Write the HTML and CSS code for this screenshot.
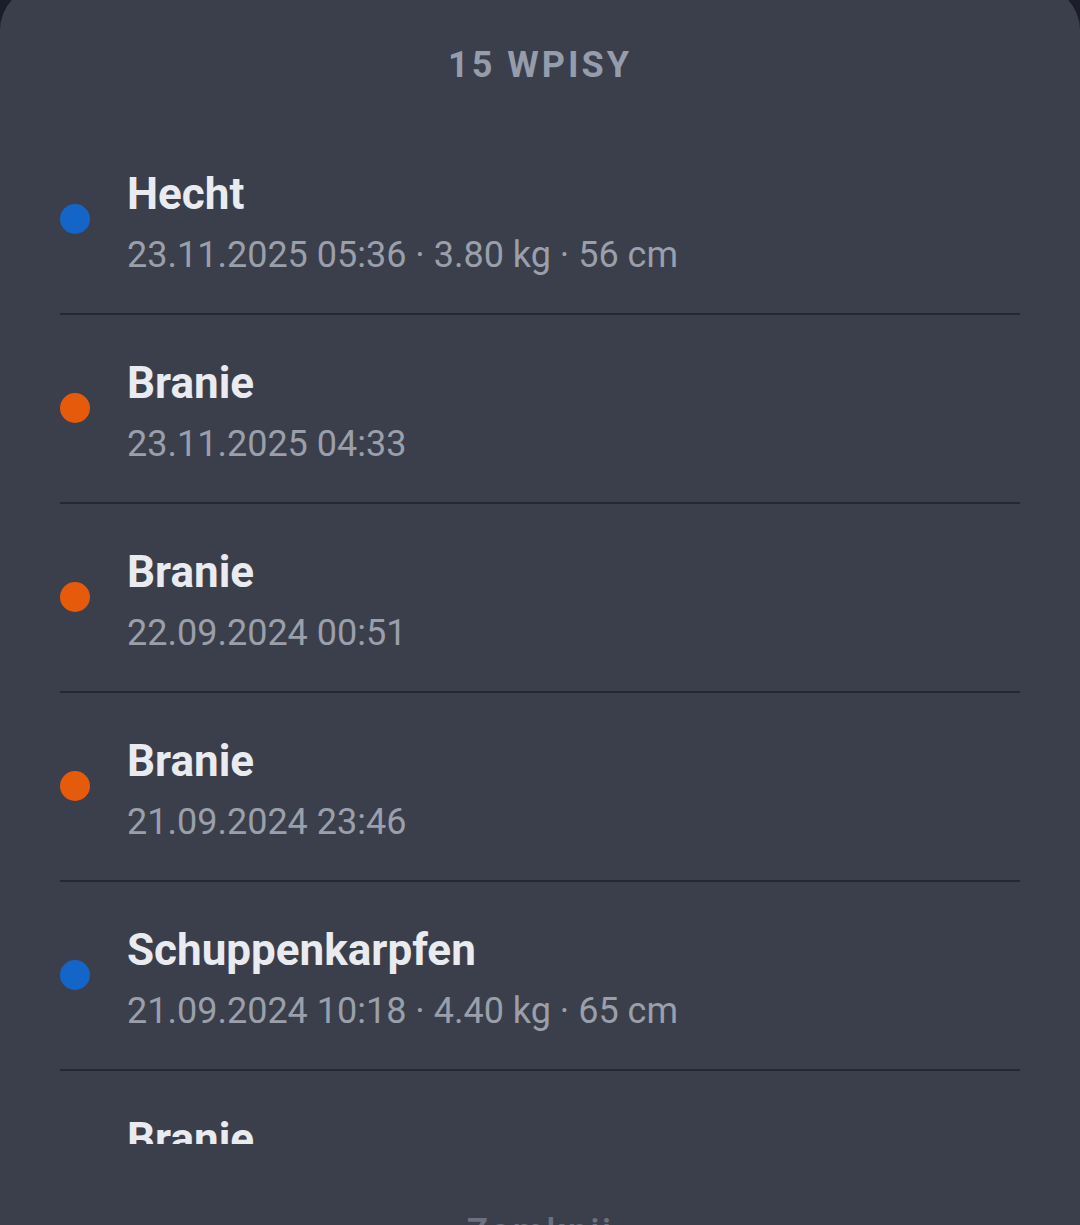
FILE: index.html
```html
<!DOCTYPE html>
<html>
<head>
    <title>Wpisy</title>
    <link rel="stylesheet" href="styles.css">
</head>
<body>
    <div class="sheet">
        <div class="sheet-header">15 WPISY</div>
        <div class="entry-list">
            <div class="entry">
                <span class="dot dot-catch"></span>
                <div class="entry-text">
                    <div class="entry-title">Hecht</div>
                    <div class="entry-meta">23.11.2025 05:36 · 3.80 kg · 56 cm</div>
                </div>
            </div>
            <div class="entry">
                <span class="dot dot-bite"></span>
                <div class="entry-text">
                    <div class="entry-title">Branie</div>
                    <div class="entry-meta">23.11.2025 04:33</div>
                </div>
            </div>
            <div class="entry">
                <span class="dot dot-bite"></span>
                <div class="entry-text">
                    <div class="entry-title">Branie</div>
                    <div class="entry-meta">22.09.2024 00:51</div>
                </div>
            </div>
            <div class="entry">
                <span class="dot dot-bite"></span>
                <div class="entry-text">
                    <div class="entry-title">Branie</div>
                    <div class="entry-meta">21.09.2024 23:46</div>
                </div>
            </div>
            <div class="entry">
                <span class="dot dot-catch"></span>
                <div class="entry-text">
                    <div class="entry-title">Schuppenkarpfen</div>
                    <div class="entry-meta">21.09.2024 10:18 · 4.40 kg · 65 cm</div>
                </div>
            </div>
            <div class="entry">
                <span class="dot dot-bite"></span>
                <div class="entry-text">
                    <div class="entry-title">Branie</div>
                    <div class="entry-meta">21.09.2024 08:12</div>
                </div>
            </div>
        </div>
        <div class="sheet-footer">
            <span class="close-button">Zamknij</span>
        </div>
    </div>
</body>
</html>
```

FILE: styles.css
```css
body {
    margin: 0;
    padding: 0;
    background-color: #1b1d2b;
    font-family: 'Roboto', 'Noto Sans', sans-serif;
    height: 1225px;
    overflow: hidden;
}

.sheet {
    margin-top: -14px;
    height: 1239px;
    background-color: #3a3f4b;
    border-radius: 44px 44px 0 0;
    display: flex;
    flex-direction: column;
}

.sheet-header {
    height: 140px;
    flex-shrink: 0;
    box-sizing: border-box;
    padding-top: 55px;
    text-align: center;
    font-size: 36px;
    line-height: 48px;
    font-weight: 700;
    letter-spacing: 3px;
    color: #959cab;
}

.entry-list {
    height: 1018px;
    overflow: hidden;
    flex-shrink: 0;
}

.entry {
    display: flex;
    align-items: center;
    gap: 37px;
    margin: 0 60px;
    padding: 40px 0 34px;
    border-bottom: 2px solid #252830;
}

.dot {
    width: 30px;
    height: 30px;
    border-radius: 50%;
    flex-shrink: 0;
    margin-bottom: 8px;
}

.dot-catch {
    background-color: #1565c8;
}

.dot-bite {
    background-color: #e65a0c;
}

.entry-title {
    font-size: 44px;
    line-height: 56px;
    font-weight: 700;
    color: #e9ebf0;
}

.entry-meta {
    margin-top: 9px;
    font-size: 36px;
    line-height: 48px;
    color: #9a9fab;
}

.sheet-footer {
    flex-shrink: 0;
    padding-top: 64px;
    text-align: center;
}

.close-button {
    font-size: 36px;
    line-height: 48px;
    font-weight: 500;
    letter-spacing: 2.5px;
    color: #6b717e;
}
```
